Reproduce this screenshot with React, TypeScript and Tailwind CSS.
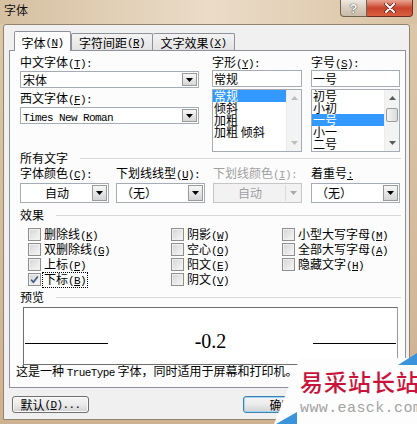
import React from "react";

// ASCII runs inside the dialog use a fixed-width face (6px per char)
const asc = "font-['Liberation_Mono',monospace] text-[11px] tracking-[-0.6px]";

function Key({ k, after = "" }: { k: string; after?: string }) {
  return (
    <span className={asc}>
      (<span className="underline">{k}</span>){after}
    </span>
  );
}

function Tri({ color = "#000" }: { color?: string }) {
  return (
    <svg width="7" height="4" viewBox="0 0 7 4">
      <polygon points="0,0 7,0 3.5,4" fill={color} />
    </svg>
  );
}

function TriUp({ color = "#000" }: { color?: string }) {
  return (
    <svg width="7" height="4" viewBox="0 0 7 4">
      <polygon points="0,4 7,4 3.5,0" fill={color} />
    </svg>
  );
}

function ArrowBtn({ disabled = false }: { disabled?: boolean }) {
  if (disabled) {
    return (
      <div className="w-[15px] h-full flex items-center justify-center border-l border-[#dadada]">
        <Tri color="#a8a8a8" />
      </div>
    );
  }
  return (
    <div className="w-[15px] h-full flex items-center justify-center border border-[#9a9a9a] bg-gradient-to-b from-[#f7f7f7] to-[#d6d6d6]">
      <Tri />
    </div>
  );
}

function TopCombo({ children, mt }: { children: React.ReactNode; mt: string }) {
  return (
    <div className={`${mt} h-[17px] border border-[#a5acb5] bg-white flex p-[1px]`}>
      <div className="flex-1 pl-[1px] leading-[13px] whitespace-pre">{children}</div>
      <ArrowBtn />
    </div>
  );
}

function Combo({
  text,
  center = false,
  disabled = false,
}: {
  text: string;
  center?: boolean;
  disabled?: boolean;
}) {
  return (
    <div
      className={`w-[89px] h-[20px] border flex p-[1px] ${
        disabled ? "border-[#c6c6c6] bg-[#f2f2f2] text-[#a0a0a0]" : "border-[#a5acb5] bg-white"
      }`}
    >
      <div
        className={`flex-1 leading-[16px] whitespace-pre ${center ? "text-center" : "pl-[3px]"}`}
      >
        {text}
      </div>
      <ArrowBtn disabled={disabled} />
    </div>
  );
}

function ScrollBar({ thumb }: { thumb: boolean }) {
  const c = thumb ? "#5a5a5a" : "#bdbdbd";
  return (
    <div className="w-[15px] h-full bg-[#f3f3f3] border-l border-[#ececec] flex flex-col items-center">
      <div className="h-[16px] flex items-center justify-center">
        <TriUp color={c} />
      </div>
      {thumb && (
        <div className="mt-[2px] w-[12px] h-[14px] rounded-[2px] border border-[#9b9b9b] bg-gradient-to-r from-[#f4f4f4] to-[#dcdcdc]" />
      )}
      <div className="flex-1" />
      <div className="h-[16px] flex items-center justify-center">
        <Tri color={c} />
      </div>
    </div>
  );
}

function ListBox({ items, sel, thumb }: { items: string[]; sel: number; thumb: boolean }) {
  return (
    <div className="mt-[2px] h-[63px] border border-[#a5acb5] bg-white flex">
      <div className="flex-1">
        {items.map((t, i) => (
          <div
            key={t}
            className={`h-[12px] leading-[12px] pl-[1px] whitespace-pre ${
              i === sel ? "bg-[#3399ff] text-white" : ""
            }`}
          >
            {t}
          </div>
        ))}
      </div>
      <ScrollBar thumb={thumb} />
    </div>
  );
}

function TextBox({ text }: { text: string }) {
  return (
    <div className="mt-[2px] h-[17px] border border-[#a5acb5] bg-white pl-[1px] leading-[15px]">
      {text}
    </div>
  );
}

function Label({ children, gray = false }: { children: React.ReactNode; gray?: boolean }) {
  return (
    <div className={`h-[12px] leading-[12px] whitespace-nowrap ${gray ? "text-[#a0a0a0]" : ""}`}>
      {children}
    </div>
  );
}

function GroupHead({ title }: { title: string }) {
  return (
    <div className="h-[12px] flex items-center pr-[4px]">
      <span className="leading-[12px] whitespace-nowrap">{title}</span>
      <div className="ml-[12px] flex-1 border-t border-[#d8d8d8]" />
    </div>
  );
}

function Check({
  label,
  k,
  checked = false,
  focus = false,
}: {
  label: string;
  k: string;
  checked?: boolean;
  focus?: boolean;
}) {
  return (
    <div className="h-[15px] flex items-center">
      <div className="w-[13px] h-[13px] border border-[#8f8f8f] bg-gradient-to-br from-[#d4d4d4] to-[#f8f8f8] shadow-[inset_0_0_0_1px_#f0f0f0] flex items-center justify-center">
        {checked && (
          <svg width="9" height="9" viewBox="0 0 9 9">
            <path d="M1.2 4.6 L3.4 7.2 L7.8 1.4" fill="none" stroke="#3f5a8a" strokeWidth="1.7" />
          </svg>
        )}
      </div>
      <div
        className={`ml-[1px] leading-[12px] whitespace-nowrap px-[1px] border border-dotted ${
          focus ? "border-black" : "border-transparent"
        }`}
      >
        {label}
        <Key k={k} />
      </div>
    </div>
  );
}

function Button({
  children,
  ml,
  primary = false,
}: {
  children: React.ReactNode;
  ml: string;
  primary?: boolean;
}) {
  return (
    <div
      className={`${ml} w-[77px] h-[17px] rounded-[3px] border flex items-center justify-center leading-[12px] bg-gradient-to-b from-[#f4f4f4] via-[#ebebeb] to-[#d2d2d2] ${
        primary
          ? "border-[#3c7fb1] shadow-[inset_0_0_0_1px_#9fd6f3]"
          : "border-[#707070] shadow-[inset_0_0_0_1px_#fafafa]"
      }`}
    >
      {children}
    </div>
  );
}

export default function App() {
  return (
    <div className="relative w-[417px] h-[424px] overflow-hidden bg-gradient-to-b from-[#dcc8ab] to-[#cdb291] font-['Noto_Sans_CJK_SC',sans-serif] text-[12px] text-black">
      {/* caption */}
      <div className="h-[24px] flex items-start bg-gradient-to-r from-[#d6c0a1] via-[#ebdcc8] to-[#d9c2a3]">
        <div className="mt-[4px] ml-[4px] leading-[12px] text-[#111]">字体</div>
        <div className="ml-auto mr-[4px] flex">
          <div className="w-[27px] h-[17px] rounded-bl-[4px] border border-t-0 border-[#6f6253] bg-gradient-to-b from-[#efe8de] via-[#d8cdbf] to-[#c9bba7] flex items-center justify-center">
            <span className="font-['Liberation_Sans',sans-serif] text-[13px] font-bold leading-[13px] text-white [text-shadow:0_0_1px_#333,0_0_1px_#333]">
              ?
            </span>
          </div>
          <div className="w-[46px] h-[17px] rounded-br-[4px] border border-t-0 border-l-0 border-[#6b2a22] bg-gradient-to-b from-[#e9a594] via-[#c8432d] to-[#d9603f] flex items-center justify-center">
            <svg width="12" height="10" viewBox="0 0 12 10">
              <path d="M2 1 L10 9 M10 1 L2 9" stroke="#5a1b12" strokeWidth="3.4" strokeLinecap="round" />
              <path d="M2 1 L10 9 M10 1 L2 9" stroke="#ffffff" strokeWidth="2" strokeLinecap="round" />
            </svg>
          </div>
        </div>
      </div>

      {/* client area */}
      <div className="ml-[3px] w-[407px] h-[396px] border border-[#94826c] rounded-t-[3px] bg-[#f0f0f0]">
        {/* tabs */}
        <div className="relative z-10 ml-[10px] mt-[6px] flex items-end h-[20px]">
          <div className="w-[57px] h-[20px] border border-b-0 border-[#8e9298] rounded-t-[2px] bg-[#fcfcfc] flex items-center justify-center pt-[3px] whitespace-nowrap">
            字体<Key k="N" />
          </div>
          <div className="mb-[1px] w-[82px] h-[17px] border border-b-0 border-[#8e9298] rounded-t-[2px] bg-gradient-to-b from-[#f3f3f3] to-[#e3e3e3] flex items-center justify-center pt-[2px] whitespace-nowrap">
            字符间距<Key k="R" />
          </div>
          <div className="mb-[1px] w-[82px] h-[17px] border border-b-0 border-l-0 border-[#8e9298] rounded-t-[2px] bg-gradient-to-b from-[#f3f3f3] to-[#e3e3e3] flex items-center justify-center pt-[2px] whitespace-nowrap">
            文字效果<Key k="X" />
          </div>
        </div>

        {/* tab page */}
        <div className="relative -mt-px ml-[5px] w-[397px] h-[338px] border border-[#8e9298] bg-[#fcfcfc] pl-[10px]">
          <div className="mt-[5px] flex">
            <div className="w-[179px]">
              <Label>
                中文字体<Key k="T" after=":" />
              </Label>
              <TopCombo mt="mt-[3px]">宋体</TopCombo>
              <div className="mt-[4px]">
                <Label>
                  西文字体<Key k="F" after=":" />
                </Label>
              </div>
              <TopCombo mt="mt-[3px]">
                <span className={asc}>Times New Roman</span>
              </TopCombo>
            </div>
            <div className="ml-[13px] w-[90px]">
              <Label>
                字形<Key k="Y" after=":" />
              </Label>
              <TextBox text="常规" />
              <ListBox items={["常规", "倾斜", "加粗", "加粗 倾斜"]} sel={0} thumb={false} />
            </div>
            <div className="ml-[9px] w-[89px]">
              <Label>
                字号<Key k="S" after=":" />
              </Label>
              <TextBox text="一号" />
              <ListBox items={["初号", "小初", "一号", "小一", "二号"]} sel={2} thumb={true} />
            </div>
          </div>

          <GroupHead title="所有文字" />

          <div className="mt-[3px] flex">
            <div className="w-[96px]">
              <Label>
                字体颜色<Key k="C" after=":" />
              </Label>
            </div>
            <div className="w-[97px]">
              <Label>
                下划线线型<Key k="U" after=":" />
              </Label>
            </div>
            <div className="w-[98px]">
              <Label gray>
                下划线颜色<Key k="I" after=":" />
              </Label>
            </div>
            <div className="w-[89px]">
              <Label>
                着重号<span className={asc}><span className="underline">:</span></span>
              </Label>
            </div>
          </div>

          <div className="mt-[4px] flex">
            <div className="w-[96px]">
              <Combo text="自动" center />
            </div>
            <div className="w-[97px]">
              <Combo text="（无）" />
            </div>
            <div className="w-[98px]">
              <Combo text="自动" center disabled />
            </div>
            <div className="w-[89px]">
              <Combo text="（无）" />
            </div>
          </div>

          <div className="mt-[6px]">
            <GroupHead title="效果" />
          </div>

          <div className="mt-[6px] ml-[8px] grid grid-flow-col grid-rows-4 grid-cols-[143px_111px_auto]">
            <Check label="删除线" k="K" />
            <Check label="双删除线" k="G" />
            <Check label="上标" k="P" />
            <Check label="下标" k="B" checked focus />
            <Check label="阴影" k="W" />
            <Check label="空心" k="O" />
            <Check label="阳文" k="E" />
            <Check label="阴文" k="V" />
            <Check label="小型大写字母" k="M" />
            <Check label="全部大写字母" k="A" />
            <Check label="隐藏文字" k="H" />
          </div>

          <div className="mt-[4px]">
            <GroupHead title="预览" />
          </div>

          {/* preview */}
          <div className="mt-[4px] ml-[3px] w-[375px] h-[58px] border border-[#6f6f6f] border-r-[#9a9a9a] bg-white flex justify-between items-start">
            <div className="ml-[1px] mt-[35px] w-[83px] h-px bg-black" />
            <div className="mt-[23px] font-['Liberation_Serif',serif] text-[20px] leading-[20px]">-0.2</div>
            <div className="mr-[1px] mt-[35px] w-[83px] h-px bg-black" />
          </div>

          <div className="-ml-[4px] h-[12px] leading-[12px] whitespace-nowrap">
            这是一种 <span className={asc}>TrueType</span> 字体，同时适用于屏幕和打印机。
          </div>
        </div>

        {/* buttons */}
        <div className="mt-[8px] flex">
          <Button ml="ml-[8px]">
            默认<Key k="D" after="..." />
          </Button>
          <Button ml="ml-[154px]" primary>
            确定
          </Button>
        </div>
      </div>

      {/* site watermark */}
      <div className="absolute left-[270px] top-[350px] w-[147px] h-[74px]">
        <svg className="absolute inset-0" width="147" height="74" viewBox="0 0 147 74">
          <polygon points="30,8 147,8 147,74 4,74" fill="#fdfdfd" />
          <polygon points="128,15 147,3 147,15" fill="#3b93db" />
          <polygon points="6,74 27,62 27,74" fill="#3b93db" />
        </svg>
        <div className="absolute left-[30px] top-[20px] text-[23px] leading-[23px] tracking-[1px] font-medium whitespace-nowrap text-[#c8143a]">
          易采站长站
        </div>
        <div className="absolute left-[30px] top-[51px] font-['Liberation_Mono',monospace] text-[15px] leading-[15px] tracking-[0.4px] whitespace-nowrap text-[#a3a3a3]">
          www.easck.com
        </div>
      </div>
    </div>
  );
}
